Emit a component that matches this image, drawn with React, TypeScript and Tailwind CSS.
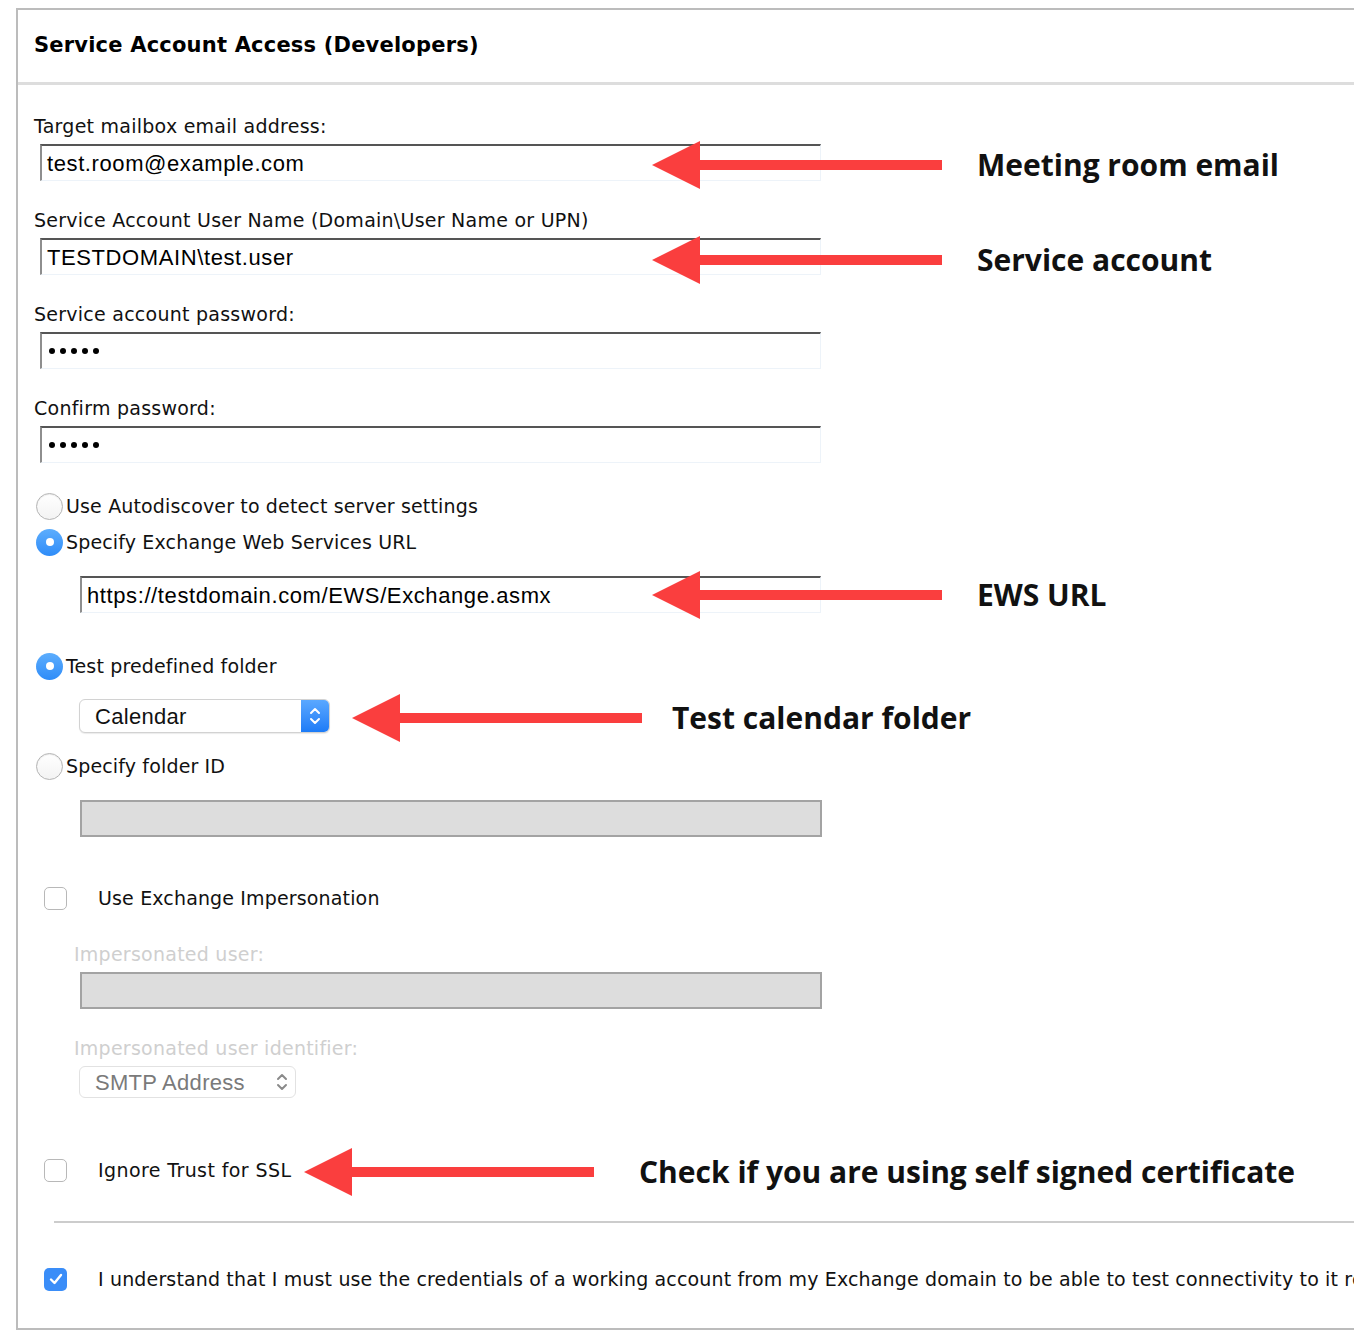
import React from 'react';

const Radio: React.FC<{ checked?: boolean }> = ({ checked }) =>
  checked ? (
    <span className="flex h-[27px] w-[27px] shrink-0 items-center justify-center rounded-full bg-gradient-to-b from-[#5cadfd] to-[#2e8cf8]">
      <span className="h-[8px] w-[8px] rounded-full bg-white" />
    </span>
  ) : (
    <span className="h-[27px] w-[27px] shrink-0 rounded-full border border-[#b4b4b4] bg-gradient-to-b from-white to-[#f3f3f3] shadow-[inset_0_1px_1px_rgba(0,0,0,0.08)]" />
  );

const Checkbox: React.FC<{ checked?: boolean }> = ({ checked }) =>
  checked ? (
    <span className="flex h-[23px] w-[23px] shrink-0 items-center justify-center rounded-[5px] bg-[#3a8df8]">
      <svg width="14" height="12" viewBox="0 0 14 12">
        <polyline points="2,6.5 5.5,10 12,2" fill="none" stroke="white" strokeWidth="2.4" strokeLinecap="round" strokeLinejoin="round" />
      </svg>
    </span>
  ) : (
    <span className="h-[23px] w-[23px] shrink-0 rounded-[5px] border border-[#b8b8b8] bg-white" />
  );

const Chevrons: React.FC<{ color: string }> = ({ color }) => (
  <svg width="14" height="22" viewBox="0 0 14 22">
    <polyline points="3,8 7,4 11,8" fill="none" stroke={color} strokeWidth="2" strokeLinecap="round" strokeLinejoin="round" />
    <polyline points="3,14 7,18 11,14" fill="none" stroke={color} strokeWidth="2" strokeLinecap="round" strokeLinejoin="round" />
  </svg>
);

const TextField: React.FC<{ value: string; className?: string; dots?: boolean }> = ({ value, className = '', dots }) => (
  <div
    className={`flex h-[37px] items-center border-t-2 border-l-2 border-r border-b border-t-[#555555] border-l-[#8e8e8e] border-r-[#edf3f9] border-b-[#edf3f9] bg-white pl-[5px] font-['Liberation_Sans',Arial,sans-serif] text-[22px] tracking-[0.6px] text-black ${className}`}
  >
    {dots ? (
      <span className="ml-[2px] flex gap-[5px]">
        {[0, 1, 2, 3, 4].map((i) => (
          <span key={i} className="h-[6px] w-[6px] rounded-full bg-black" />
        ))}
      </span>
    ) : (
      value
    )}
  </div>
);

const DisabledField: React.FC<{ className?: string }> = ({ className = '' }) => (
  <div className={`h-[37px] border-2 border-[#a3a3a3] bg-[#dddddd] ${className}`} />
);

const Label: React.FC<{ children: React.ReactNode; muted?: boolean; className?: string }> = ({ children, muted, className = '' }) => (
  <div className={`h-6 text-[19px] leading-6 tracking-[0.25px] ${muted ? 'text-[#cfcfcf]' : 'text-[#111]'} ${className}`}>{children}</div>
);

const Arrow: React.FC<{ tip: number; end: number; y: number }> = ({ tip, end, y }) => (
  <svg
    className="absolute"
    style={{ left: tip, top: y - 25 }}
    width={end - tip}
    height="50"
    viewBox={`0 0 ${end - tip} 50`}
  >
    <polygon points="0,25 48,1 48,49" fill="#fa3e3e" />
    <rect x="47" y="20" width={end - tip - 47} height="10" fill="#fa3e3e" />
  </svg>
);

const Note: React.FC<{ x: number; y: number; children: React.ReactNode }> = ({ x, y, children }) => (
  <div
    className="absolute whitespace-nowrap font-['Open_Sans',sans-serif] text-[30px] font-bold leading-10 text-[#111]"
    style={{ left: x, top: y - 20 }}
  >
    {children}
  </div>
);

export default function App() {
  return (
    <div className="relative h-[1330px] w-[1354px] overflow-hidden bg-white font-['DejaVu_Sans',Verdana,sans-serif]">
      <div className="pl-4 pt-2">
        <div className="w-[1400px] border-2 border-r-0 border-[#bcbcbc]">
          {/* header */}
          <div className="flex h-[75px] items-center border-b-[3px] border-[#dddddd] pl-4">
            <h1 className="text-[21px] font-bold tracking-[0.2px] text-black">Service Account Access (Developers)</h1>
          </div>

          {/* body */}
          <div className="pl-4 pt-[29px] pb-[31px] tracking-[0.15px]">
            <Label>Target mailbox email address:</Label>
            <TextField value="test.room@example.com" className="ml-1.5 mt-1.5 w-[781px]" />

            <Label className="mt-[27px]">Service Account User Name (Domain\User Name or UPN)</Label>
            <TextField value="TESTDOMAIN\test.user" className="ml-1.5 mt-1.5 w-[781px]" />

            <Label className="mt-[27px]">Service account password:</Label>
            <TextField value="" dots className="ml-1.5 mt-1.5 w-[781px]" />

            <Label className="mt-[27px]">Confirm password:</Label>
            <TextField value="" dots className="ml-1.5 mt-1.5 w-[781px]" />

            <div className="ml-0.5 mt-[25px] flex h-9 items-center gap-[3px] text-[19px] text-[#111]">
              <Radio />
              <span>Use Autodiscover to detect server settings</span>
            </div>
            <div className="ml-0.5 flex h-9 items-center gap-[3px] text-[19px] text-[#111]">
              <Radio checked />
              <span>Specify Exchange Web Services URL</span>
            </div>
            <TextField value="https://testdomain.com/EWS/Exchange.asmx" className="ml-[46px] mt-4 w-[741px]" />

            <div className="ml-0.5 mt-[35px] flex h-9 items-center gap-[3px] text-[19px] text-[#111]">
              <Radio checked />
              <span>Test predefined folder</span>
            </div>
            <div className="ml-[45px] mt-[15px] flex h-[34px] w-[251px] overflow-hidden rounded-[6px] border border-[#d2d2d2] bg-white font-['Liberation_Sans',Arial,sans-serif] shadow-[0_1px_1px_rgba(0,0,0,0.08)]">
              <div className="flex flex-1 items-center pl-[15px] text-[22px] tracking-[0.3px] text-[#111]">Calendar</div>
              <div className="flex w-[28px] items-center justify-center bg-gradient-to-b from-[#5aa8ff] to-[#1c7bf7]">
                <Chevrons color="#ffffff" />
              </div>
            </div>
            <div className="ml-0.5 mt-[15px] flex h-9 items-center gap-[3px] text-[19px] text-[#111]">
              <Radio />
              <span>Specify folder ID</span>
            </div>
            <DisabledField className="ml-[46px] mt-4 w-[742px]" />

            <div className="ml-2.5 mt-[43px] flex h-9 items-center gap-[31px] text-[19px] text-[#111]">
              <Checkbox />
              <span>Use Exchange Impersonation</span>
            </div>
            <Label muted className="ml-10 mt-[26px]">Impersonated user:</Label>
            <DisabledField className="ml-[46px] mt-1.5 w-[742px]" />

            <Label muted className="ml-10 mt-[27px]">Impersonated user identifier:</Label>
            <div className="ml-[45px] mt-1.5 flex h-[32px] w-[217px] items-center justify-between rounded-[6px] border border-[#e2e2e2] bg-white pl-[15px] pr-[6px] font-['Liberation_Sans',Arial,sans-serif] text-[22px] tracking-[0.3px] text-[#7a7a7a]">
              <span>SMTP Address</span>
              <Chevrons color="#8a8a8a" />
            </div>

            <div className="ml-2.5 mt-[54px] flex h-9 items-center gap-[31px] text-[19px] tracking-[0.4px] text-[#111]">
              <Checkbox />
              <span>Ignore Trust for SSL</span>
            </div>

            <div className="ml-5 mt-[33px] h-[2px] bg-[#cccccc]" />

            <div className="ml-2.5 mt-[38px] flex h-9 items-center gap-[31px] whitespace-nowrap text-[19px] text-[#111]">
              <Checkbox checked />
              <span>
                I understand that I must use the credentials of a working account from my Exchange domain to be able to test connectivity to it remotely.
              </span>
            </div>
          </div>
        </div>
      </div>

      {/* annotations */}
      <Arrow tip={652} end={942} y={165} />
      <Note x={977} y={165}>Meeting room email</Note>
      <Arrow tip={652} end={942} y={260} />
      <Note x={977} y={260}>Service account</Note>
      <Arrow tip={652} end={942} y={595} />
      <Note x={977} y={595}>EWS URL</Note>
      <Arrow tip={352} end={642} y={718} />
      <Note x={672} y={718}>Test calendar folder</Note>
      <Arrow tip={304} end={594} y={1172} />
      <Note x={639} y={1172}>Check if you are using self signed certificate</Note>
    </div>
  );
}
